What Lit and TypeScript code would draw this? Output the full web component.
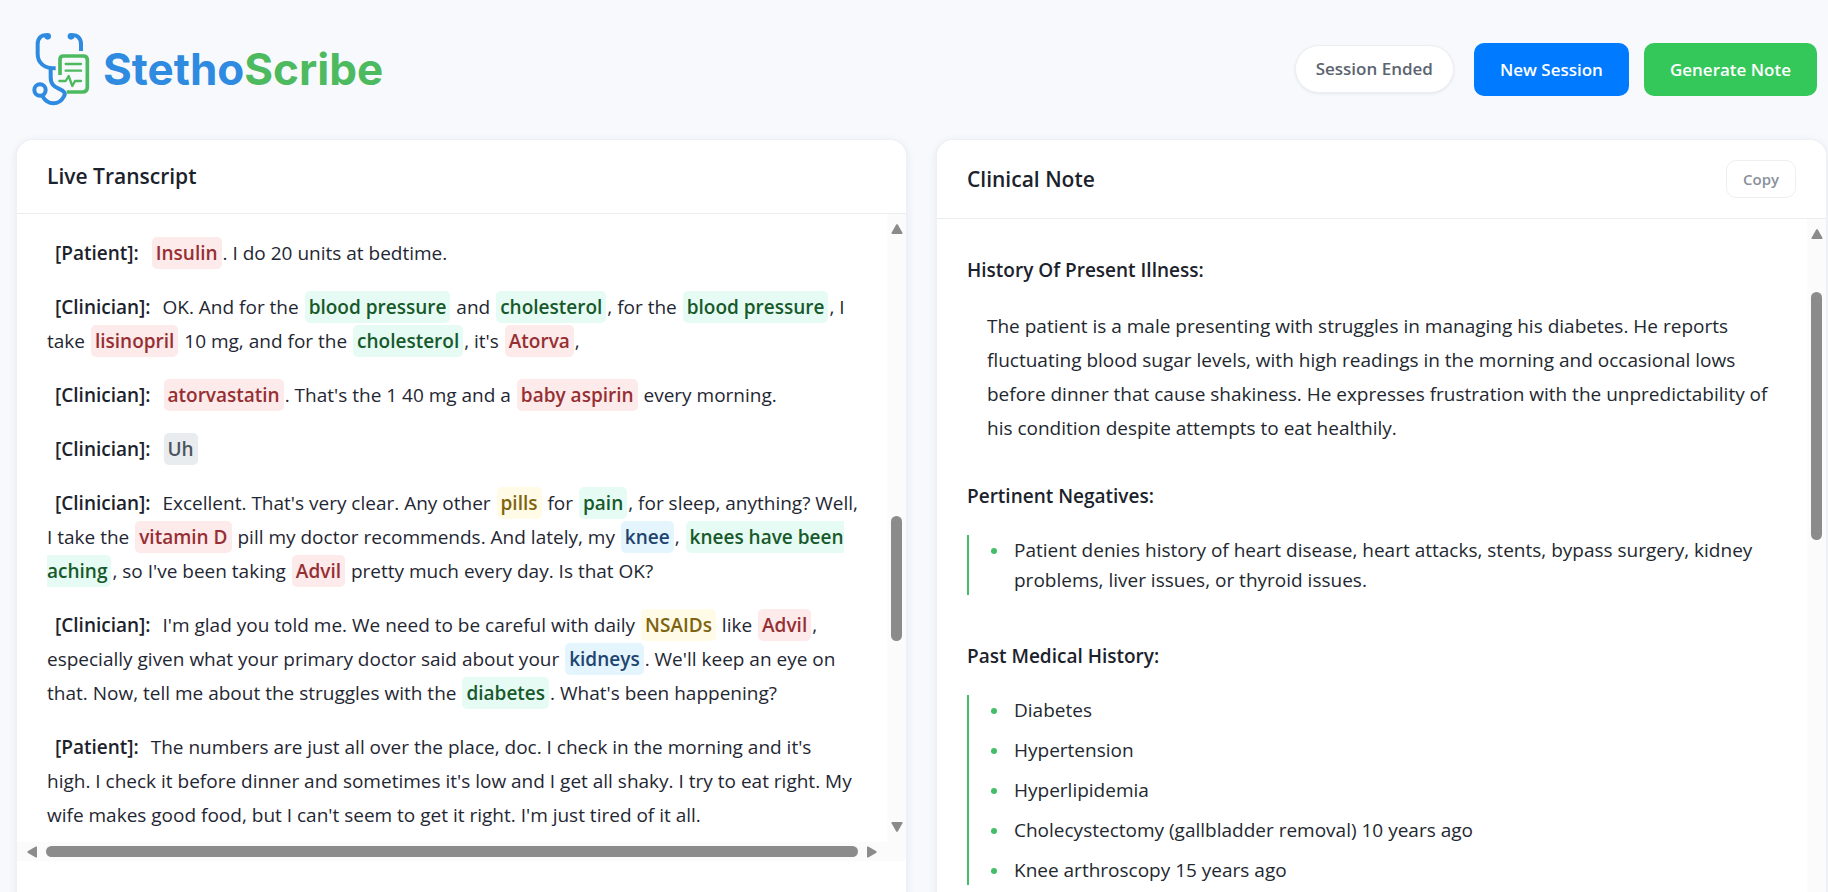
import { LitElement, html, css, svg } from "lit";
import { customElement, property } from "lit/decorators.js";
import { classMap } from "lit/directives/class-map.js";

type Kind = "drug" | "condition" | "anatomy" | "class" | "filler";
type Part = string | { kind: Kind; text: string };
interface Turn {
  speaker: string;
  parts: Part[];
}
interface Section {
  title: string;
  text?: string;
  items?: string[];
}

const drug = (text: string): Part => ({ kind: "drug", text });
const condition = (text: string): Part => ({ kind: "condition", text });
const anatomy = (text: string): Part => ({ kind: "anatomy", text });
const drugClass = (text: string): Part => ({ kind: "class", text });
const filler = (text: string): Part => ({ kind: "filler", text });

const TURNS: Turn[] = [
  { speaker: "Patient", parts: [drug("Insulin"), ". I do 20 units at bedtime."] },
  {
    speaker: "Clinician",
    parts: [
      "OK. And for the ", condition("blood pressure"), " and ", condition("cholesterol"),
      ", for the ", condition("blood pressure"), ", I take ", drug("lisinopril"),
      " 10 mg, and for the ", condition("cholesterol"), ", it's ", drug("Atorva"), ",",
    ],
  },
  {
    speaker: "Clinician",
    parts: [drug("atorvastatin"), ". That's the 1 40 mg and a ", drug("baby aspirin"), " every morning."],
  },
  { speaker: "Clinician", parts: [filler("Uh")] },
  {
    speaker: "Clinician",
    parts: [
      "Excellent. That's very clear. Any other ", drugClass("pills"), " for ", condition("pain"),
      ", for sleep, anything? Well, I take the ", drug("vitamin D"),
      " pill my doctor recommends. And lately, my ", anatomy("knee"), ", ",
      condition("knees have been aching"), ", so I've been taking ", drug("Advil"),
      " pretty much every day. Is that OK?",
    ],
  },
  {
    speaker: "Clinician",
    parts: [
      "I'm glad you told me. We need to be careful with daily ", drugClass("NSAIDs"), " like ",
      drug("Advil"), ", especially given what your primary doctor said about your ",
      anatomy("kidneys"), ". We'll keep an eye on that. Now, tell me about the struggles with the ",
      condition("diabetes"), ". What's been happening?",
    ],
  },
  {
    speaker: "Patient",
    parts: [
      "The numbers are just all over the place, doc. I check in the morning and it's\nhigh. I check it before dinner and sometimes it's low and I get all shaky. I try to eat right. My wife makes good food, but I can't seem to get it right. I'm just tired of it all.",
    ],
  },
];

const SECTIONS: Section[] = [
  {
    title: "History Of Present Illness:",
    text: "The patient is a male presenting with struggles in managing his diabetes. He reports fluctuating blood sugar levels, with high readings in the morning and occasional lows before dinner that cause shakiness. He expresses frustration with the unpredictability of his condition despite attempts to eat healthily.",
  },
  {
    title: "Pertinent Negatives:",
    items: [
      "Patient denies history of heart disease, heart attacks, stents, bypass surgery, kidney problems, liver issues, or thyroid issues.",
    ],
  },
  {
    title: "Past Medical History:",
    items: [
      "Diabetes",
      "Hypertension",
      "Hyperlipidemia",
      "Cholecystectomy (gallbladder removal) 10 years ago",
      "Knee arthroscopy 15 years ago",
    ],
  },
];

@customElement("scroll-track")
class ScrollTrack extends LitElement {
  @property({ type: Boolean, reflect: true }) horizontal = false;
  @property({ type: Number }) before = 0;
  @property({ type: Number }) size = 1;
  @property({ type: Number }) after = 0;

  static styles = css`
    :host {
      display: flex;
      flex-direction: column;
      align-items: center;
      box-sizing: border-box;
      width: 19px;
      padding: 10px 0;
      gap: 5px;
      background: #fbfbfb;
    }
    :host([horizontal]) {
      flex-direction: row;
      width: auto;
      height: 19px;
      padding: 0 10px;
      gap: 9px;
    }
    .arrow {
      flex: none;
      width: 12px;
      height: 10px;
      fill: #8b8b8b;
    }
    :host([horizontal]) .arrow {
      width: 10px;
      height: 12px;
    }
    .rail {
      flex: 1;
      display: flex;
      flex-direction: column;
      width: 11px;
    }
    :host([horizontal]) .rail {
      flex-direction: row;
      width: auto;
      height: 11px;
    }
    .thumb {
      border-radius: 6px;
      background: #8b8b8b;
    }
  `;

  private arrow(forward: boolean) {
    if (this.horizontal) {
      const d = forward
        ? "M0 1.2Q0 0 1.2.6L9.4 5.2Q10 6 9.4 6.8L1.2 11.4Q0 12 0 10.8Z"
        : "M10 1.2Q10 0 8.8.6L.6 5.2Q0 6 .6 6.8L8.8 11.4Q10 12 10 10.8Z";
      return html`<svg class="arrow" viewBox="0 0 10 12">${svg`<path d=${d} />`}</svg>`;
    }
    const d = forward
      ? "M1.2 0Q0 0 .6 1.2L5.2 9.4Q6 10 6.8 9.4L11.4 1.2Q12 0 10.8 0Z"
      : "M1.2 10Q0 10 .6 8.8L5.2.6Q6 0 6.8.6L11.4 8.8Q12 10 10.8 10Z";
    return html`<svg class="arrow" viewBox="0 0 12 10">${svg`<path d=${d} />`}</svg>`;
  }

  render() {
    return html`
      ${this.arrow(false)}
      <div class="rail">
        <div style="flex: ${this.before} 0 0"></div>
        <div class="thumb" style="flex: ${this.size} 0 0"></div>
        <div style="flex: ${this.after} 0 0"></div>
      </div>
      ${this.arrow(true)}
    `;
  }
}

@customElement("app-root")
class AppRoot extends LitElement {
  static styles = css`
    :host {
      display: block;
      box-sizing: border-box;
      height: 100vh;
      overflow: hidden;
      background: #f8f9fd;
      color: #1f2733;
      font-family: "Open Sans", "Noto Sans", sans-serif;
      font-size: 19px;
    }
    .header {
      display: flex;
      align-items: center;
      justify-content: space-between;
      box-sizing: border-box;
      height: 140px;
      padding: 0 11px 2px 30px;
    }
    .brand {
      display: flex;
      align-items: center;
      gap: 10px;
    }
    .mark {
      width: 63px;
      height: 76px;
      fill: none;
      stroke-linejoin: round;
    }
    .blue {
      stroke: #2f8be0;
      stroke-width: 12;
    }
    .green {
      stroke: #4dba60;
      stroke-width: 11;
    }
    .thin {
      stroke-width: 7;
      stroke-linecap: round;
    }
    .bud {
      fill: #2f8be0;
    }
    .name {
      margin: 0;
      font: 700 44px/60px Inter, sans-serif;
      color: #2f8be0;
    }
    .name-end {
      color: #4dba60;
    }
    .actions {
      display: flex;
      align-items: center;
      gap: 15px;
    }
    .status {
      margin-right: 5px;
      padding: 0 20px;
      border: 1px solid #eceef2;
      border-radius: 24px;
      background: #fff;
      box-shadow: 0 1px 3px rgba(30, 40, 70, 0.08);
      color: #5b6470;
      font-size: 17px;
      font-weight: 600;
      line-height: 46px;
    }
    .button {
      padding: 0 26px;
      border: 0;
      border-radius: 10px;
      color: #fff;
      font: 600 17px/53px "Open Sans", "Noto Sans", sans-serif;
      cursor: pointer;
    }
    .new {
      background: #007aff;
    }
    .generate {
      background: #34c759;
    }
    .panels {
      display: grid;
      grid-template-columns: 1fr 1fr;
      gap: 31px;
      height: calc(100vh - 80px);
      padding: 0 2px 0 17px;
    }
    .panel {
      display: flex;
      flex-direction: column;
      min-width: 0;
      border-radius: 16px;
      overflow: hidden;
      background: #fff;
    }
    .shell {
      display: grid;
      min-width: 0;
      border-radius: 16px;
      box-shadow: 0 0 0 1px #eef0f4, 0 2px 10px rgba(30, 40, 70, 0.1);
    }
    .panel-header {
      display: flex;
      align-items: center;
      justify-content: space-between;
      padding: 20px 30px;
      border-bottom: 1px solid #ebecee;
    }
    .panel-title {
      margin: 0;
      color: #1b222c;
      font-size: 21px;
      font-weight: 600;
      line-height: 33px;
    }
    .copy {
      padding: 0 16px;
      border: 1px solid #eceef0;
      border-radius: 10px;
      background: #fff;
      color: #8a919b;
      font: 600 15px/36px "Open Sans", "Noto Sans", sans-serif;
      cursor: pointer;
    }
    .scroller {
      display: grid;
      grid-template-columns: 1fr auto;
    }
    .filled {
      flex: 1;
    }
    .corner {
      background: #fbfbfb;
    }
    .transcript {
      display: flex;
      flex-direction: column;
      gap: 20px;
      padding: 22px 24px 10px 30px;
    }
    .turn {
      margin: 0;
      line-height: 34px;
      white-space: pre-line;
    }
    .speaker {
      padding: 0 7px 0 8px;
      color: #1b222c;
      font-weight: 600;
    }
    .chip {
      margin: 0 1px;
      padding: 3px 4px;
      border-radius: 5px;
      font-weight: 600;
    }
    .drug {
      background: #fdeaea;
      color: #962f33;
    }
    .condition {
      background: #e6fbf3;
      color: #17592b;
    }
    .anatomy {
      background: #e4f5fe;
      color: #1f4470;
    }
    .class {
      background: #fffbe6;
      color: #7d6410;
    }
    .filler {
      background: #e8ecef;
      color: #4a545e;
    }
    .note {
      padding: 36px 30px 0;
      color: #23282f;
    }
    .section-title {
      margin: 0 0 24px;
      color: #1b222c;
      font-size: 19px;
      font-weight: 600;
      line-height: 30px;
    }
    .prose {
      margin: 0 0 36px;
      padding: 0 0 0 20px;
      line-height: 34px;
    }
    .list {
      display: flex;
      flex-direction: column;
      gap: 10px;
      margin: 0 0 46px;
      padding: 0 0 0 20px;
      border-left: 2px solid #45bd68;
      list-style: none;
      line-height: 30px;
    }
    .item {
      display: flex;
      gap: 17px;
    }
    .item::before {
      content: "";
      flex: none;
      width: 6px;
      height: 6px;
      margin: 13px 0 0 2px;
      border-radius: 50%;
      background: #45bd68;
    }
  `;

  private renderPart(part: Part) {
    return typeof part === "string"
      ? part
      : html`<span class=${classMap({ chip: true, [part.kind]: true })}>${part.text}</span>`;
  }

  private renderTurn(turn: Turn) {
    return html`<p class="turn"><span class="speaker">[${turn.speaker}]:</span> ${turn.parts.map((p) => this.renderPart(p))}</p>`;
  }

  private renderSection(section: Section) {
    return html`
      <h3 class="section-title">${section.title}</h3>
      ${section.text ? html`<p class="prose">${section.text}</p>` : null}
      ${section.items
        ? html`<ul class="list">${section.items.map((i) => html`<li class="item">${i}</li>`)}</ul>`
        : null}
    `;
  }

  render() {
    return html`
      <header class="header">
        <div class="brand">
          <svg class="mark" viewBox="90 96 189 228" aria-hidden="true">
            <path class="green" d="M180 228V181Q180 171 190 171H250Q262 171 262 183V264Q262 279 247 279H200" />
            <path class="green thin" d="M197 195H243M197 215H243" />
            <path class="green thin" d="M178 246H197L206 231L217 261L225 246H243" />
            <path class="blue" d="M146 111C126 103 113 117 113 136V164C113 190 130 208 167 208" />
            <path class="blue" d="M210 111C230 103 243 117 243 136V156" />
            <path class="blue" d="M152 208V234C152 256 162 263 176 269C192 276 198 282 192 292C184 307 173 313 160 313C144 313 134 303 127 291" />
            <circle class="blue" cx="120" cy="273" r="17" />
            <circle class="bud" cx="143" cy="112" r="10" />
            <circle class="bud" cx="213" cy="112" r="10" />
          </svg>
          <h1 class="name">Stetho<span class="name-end">Scribe</span></h1>
        </div>
        <div class="actions">
          <span class="status" role="status">Session Ended</span>
          <button class="button new" type="button">New Session</button>
          <button class="button generate" type="button">Generate Note</button>
        </div>
      </header>
      <main class="panels">
        <div class="shell">
          <section class="panel" aria-labelledby="live">
            <div class="panel-header"><h2 class="panel-title" id="live">Live Transcript</h2></div>
            <div class="scroller">
              <div class="transcript">${TURNS.map((t) => this.renderTurn(t))}</div>
              <scroll-track aria-hidden="true" .before=${278} .size=${125} .after=${177}></scroll-track>
              <scroll-track aria-hidden="true" horizontal .before=${0} .size=${1} .after=${0}></scroll-track>
              <div class="corner"></div>
            </div>
          </section>
        </div>
        <div class="shell">
          <section class="panel" aria-labelledby="note">
            <div class="panel-header">
              <h2 class="panel-title" id="note">Clinical Note</h2>
              <button class="copy" type="button">Copy</button>
            </div>
            <div class="scroller filled">
              <div class="note">${SECTIONS.map((s) => this.renderSection(s))}</div>
              <scroll-track aria-hidden="true" .before=${48} .size=${249} .after=${388}></scroll-track>
            </div>
          </section>
        </div>
      </main>
    `;
  }
}
